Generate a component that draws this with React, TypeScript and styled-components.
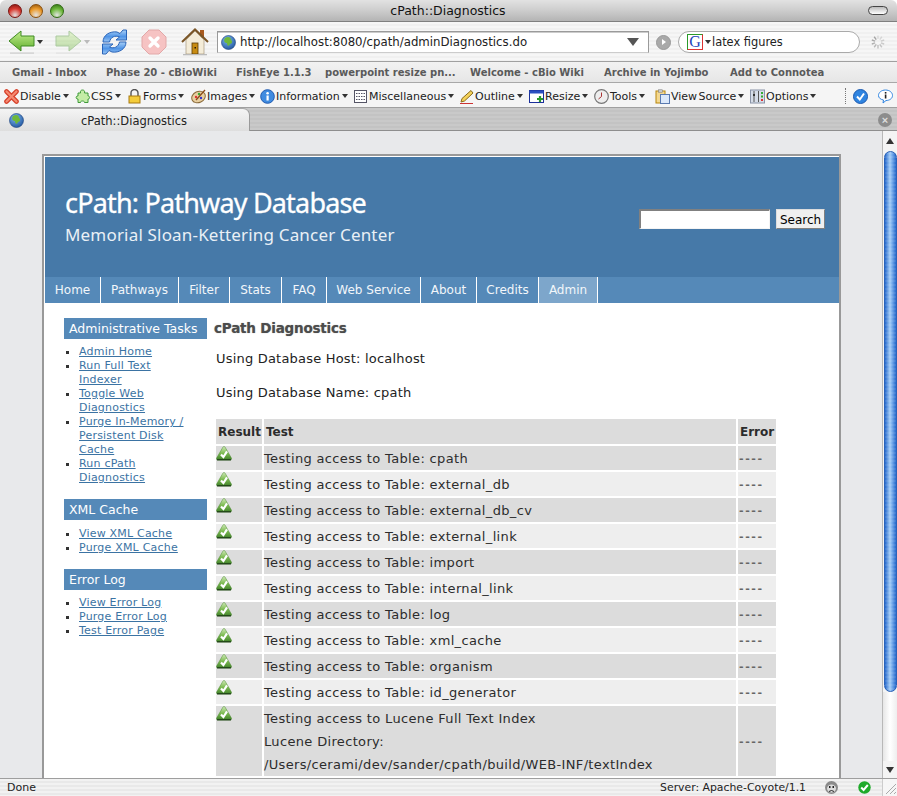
import React from 'react';
import styled, { createGlobalStyle } from 'styled-components';

const GlobalStyle = createGlobalStyle`
	html, body {
		margin: 0;
		padding: 0;
		background: #fff;
		overflow: hidden;
	}
	* {
		box-sizing: border-box;
	}
`;

const uiFont = `"DejaVu Sans", "Liberation Sans", sans-serif`;

const Window = styled.div`
	width: 897px;
	height: 796px;
	display: flex;
	flex-direction: column;
	overflow: hidden;
	font-family: ${uiFont};
	color: #222;
`;

const TitleBar = styled.div`
	height: 22px;
	flex: none;
	display: flex;
	align-items: center;
	justify-content: space-between;
	padding: 0 9px 0 8px;
	border-radius: 6px 6px 0 0;
	border-bottom: 1px solid #7f7f7f;
	background: linear-gradient(#e2e2e2, #cfcfcf 45%, #b4b4b4);
`;

const Lights = styled.div`
	display: flex;
	gap: 7px;
	width: 100px;
`;

const Light = styled.span<{ $color: string; $dark: string }>`
	width: 14px;
	height: 14px;
	border-radius: 50%;
	border: 1px solid ${(p) => p.$dark};
	background: radial-gradient(circle at 50% 85%, #fff8 0, ${(p) => p.$color} 55%, ${(p) => p.$dark} 100%);
`;

const WindowTitle = styled.div`
	font-size: 12.5px;
	color: #111;
`;

const TitlePill = styled.div`
	width: 100px;
	display: flex;
	justify-content: flex-end;
	& > span {
		width: 20px;
		height: 9px;
		border-radius: 5px;
		border: 1.5px solid #444;
		background: linear-gradient(#bbb, #fff);
	}
`;

const NavBar = styled.div`
	height: 40px;
	flex: none;
	display: flex;
	align-items: center;
	padding: 1px 0 0 8px;
	border-bottom: 1px solid #a0a0a0;
	background: repeating-linear-gradient(#f6f6f6 0 2px, #f0f0f0 2px 4px);
`;

const Caret = styled.span<{ $faded?: boolean }>`
	width: 0;
	height: 0;
	margin: 0 0 0 2px;
	border-left: 3px solid transparent;
	border-right: 3px solid transparent;
	border-top: 4px solid ${(p) => (p.$faded ? '#bbb' : '#333')};
`;

const NavButton = styled.span<{ $width: number }>`
	width: ${(p) => p.$width}px;
	display: flex;
	align-items: center;
	flex: none;
`;

const UrlField = styled.div`
	width: 432px;
	height: 22px;
	margin-left: 2px;
	display: flex;
	align-items: center;
	gap: 4px;
	padding: 0 9px 0 3px;
	background: #fff;
	border: 1px solid #9a9a9a;
	border-bottom-color: #ccc;
	box-shadow: inset 0 1px 0 #ccc;
	font-size: 11.75px;
	color: #222;
`;

const UrlText = styled.span`
	flex: 1;
`;

const UrlArrow = styled.span`
	border-left: 6px solid transparent;
	border-right: 6px solid transparent;
	border-top: 8px solid #555;
`;

const GoButton = styled.span`
	width: 15px;
	height: 15px;
	margin: 0 7px;
	flex: none;
	border-radius: 50%;
	background: #a9a9a9;
	border: 1px solid #999;
	display: flex;
	align-items: center;
	justify-content: center;
`;

const SearchField = styled.div`
	width: 182px;
	height: 22px;
	flex: none;
	display: flex;
	align-items: center;
	padding: 0 8px;
	background: #fff;
	border: 1px solid #aaa;
	border-radius: 11px;
	font-size: 11.4px;
`;

const GoogleBox = styled.span`
	width: 16px;
	height: 16px;
	flex: none;
	border: 1px solid #2a9a2a;
	border-right-color: #d33;
	border-bottom-color: #d33;
	color: #2244bb;
	font: 16px/14px "Liberation Serif", serif;
	text-align: center;
`;

const SearchText = styled.span`
	margin-left: 1px;
`;

const BookmarkBar = styled.div`
	height: 21px;
	flex: none;
	display: flex;
	align-items: center;
	gap: 15px;
	padding: 1px 0 0 12px;
	border-bottom: 1px solid #a8a8a8;
	background: linear-gradient(#f2f2f2, #e6e6e6);
`;

const Bookmark = styled.span<{ $width: number }>`
	width: ${(p) => p.$width}px;
	flex: none;
	font-size: 10px;
	font-weight: 700;
	color: #5a5a5a;
	white-space: nowrap;
`;

const DevBar = styled.div`
	height: 25px;
	flex: none;
	display: flex;
	align-items: center;
	padding: 2px 0 0 4px;
	border-bottom: 1px solid #a0a0a0;
	background: #f5f5f5;
`;

const DevItem = styled.span<{ $width: number }>`
	width: ${(p) => p.$width}px;
	flex: none;
	display: flex;
	align-items: center;
	gap: 1px;
	font-size: 11px;
	word-spacing: -2px;
	color: #222;
	white-space: nowrap;
`;

const DevCaret = styled(Caret)`
	margin-left: 1px;
`;

const DevSpacer = styled.span`
	width: 8px;
	height: 16px;
	flex: none;
	margin-left: 19px;
	border-left: 1px dotted #777;
`;

const DevExtra = styled.span`
	width: 25px;
	flex: none;
	display: flex;
`;

const TabStrip = styled.div`
	height: 23px;
	flex: none;
	display: flex;
	align-items: flex-end;
	justify-content: space-between;
	padding-right: 5px;
	border-bottom: 1px solid #8e8e8e;
	background: repeating-linear-gradient(#c9c9c9 0 2px, #c3c3c3 2px 4px);
`;

const Tab = styled.div`
	width: 250px;
	height: 23px;
	margin-bottom: -1px;
	position: relative;
	display: flex;
	align-items: center;
	padding: 1px 0 0 9px;
	border: 1px solid #9a9a9a;
	border-top-color: #aaa;
	border-left: none;
	border-bottom: none;
	border-radius: 0 7px 0 0;
	background: linear-gradient(#f4f4f4, #dedede);
`;

const TabLabel = styled.span`
	margin-left: 57px;
	font-size: 11.5px;
	color: #222;
`;

const TabClose = styled.span`
	width: 14px;
	height: 14px;
	margin-bottom: 3px;
	border-radius: 50%;
	background: #8c8c8c;
	color: #ddd;
	font: 700 11px/14px "Liberation Sans", sans-serif;
	text-align: center;
`;

const Viewport = styled.div`
	flex: 1;
	min-height: 0;
	display: flex;
	overflow: hidden;
`;

const Gutter = styled.div`
	flex: 1;
	min-width: 0;
	overflow: hidden;
	padding: 23px 41px 0 42px;
	background: #e8e9eb;
`;

const Sheet = styled.div`
	background: #fff;
	border: 2px solid #999;
	border-bottom: none;
	padding: 1px 0 0 1px;
	min-height: 700px;
`;

const Banner = styled.header`
	height: 120px;
	display: flex;
	justify-content: space-between;
	padding: 28px 14px 0 20px;
	background: #4679a8;
`;

const Brand = styled.div`
	color: #fff;
`;

const BrandTitle = styled.h1`
	margin: 0;
	font: 400 27px/36px "Noto Sans", sans-serif;
	letter-spacing: -0.82px;
	-webkit-text-stroke: 0.3px #fff;
`;

const BrandSub = styled.h2`
	margin: 2px 0 0;
	font: 400 17px/24px "Noto Sans", sans-serif;
	letter-spacing: 0.18px;
	color: #eaf0f6;
`;

const SearchForm = styled.form`
	margin-top: 24px;
	display: flex;
	gap: 6px;
	height: 20px;
`;

const SearchInput = styled.input`
	width: 131px;
	height: 20px;
	padding: 0;
	border: 1px solid #f4f4f4;
	border-top: 2px solid #808080;
	border-left: 2px solid #808080;
	background: #fff;
`;

const SearchButton = styled.button`
	width: 49px;
	height: 20px;
	padding: 1px 0 0;
	font: 12px/16px "DejaVu Sans", sans-serif;
	color: #000;
	background: #f0f0f0;
	border: 1px solid #808080;
	border-top-color: #ddd;
	border-left-color: #ddd;
`;

const Menu = styled.nav`
	height: 26px;
	display: flex;
	background: #5589b8;
`;

const MenuItem = styled.a<{ $width: number; $active?: boolean }>`
	width: ${(p) => p.$width}px;
	flex: none;
	text-align: center;
	font-size: 12px;
	line-height: 26px;
	color: #f2f6fa;
	border-right: 1px solid #fff;
	background: ${(p) => (p.$active ? '#7da6cb' : 'transparent')};
`;

const Body = styled.div`
	display: flex;
	padding: 15px 0 0 19px;
`;

const Sidebar = styled.aside`
	width: 143px;
	flex: none;
`;

const SideHeading = styled.h3`
	margin: 0;
	height: 21px;
	padding-left: 5px;
	font-size: 12.5px;
	font-weight: 400;
	line-height: 21px;
	color: #fff;
	background: #5589b8;
`;

const SideList = styled.ul<{ $top?: number }>`
	margin: ${(p) => p.$top ?? 6}px 0 14px;
	padding: 0 16px 0 15px;
	list-style: square;
	font-size: 11px;
	line-height: 14px;
	letter-spacing: 0.2px;
	color: #333;
`;

const SideLink = styled.a`
	color: #3b73a3;
	text-decoration: underline;
`;

const Main = styled.main`
	margin-left: 9px;
	width: 560px;
`;

const Heading = styled.h2`
	margin: 0 0 0 -2px;
	font: 700 13.5px/20px "DejaVu Sans", sans-serif;
	letter-spacing: -0.2px;
	color: #4c4c4c;
	text-shadow: 0 0 1px #999;
`;

const InfoLine = styled.p`
	margin: 11px 0 0;
	font-size: 13px;
	line-height: 20px;
	letter-spacing: 0.2px;
	color: #222;
	& + & {
		margin-top: 14px;
	}
`;

const Results = styled.table`
	margin: 14px 0 0 -2px;
	width: 564px;
	border-collapse: separate;
	border-spacing: 2px;
	table-layout: fixed;
	font-size: 13px;
	letter-spacing: 0.34px;
	color: #2c2c2c;
`;

const HeadCell = styled.th`
	height: 25px;
	padding: 0 2px;
	text-align: left;
	font-weight: 700;
	font-size: 12px;
	letter-spacing: 0;
	background: #dcdcdc;
`;

const Row = styled.tr<{ $odd: boolean }>`
	background: ${(p) => (p.$odd ? '#dcdcdc' : '#eeeeee')};
`;

const IconCell = styled.td`
	height: 24px;
	padding: 0;
	vertical-align: top;
`;

const TestCell = styled.td`
	padding: 1px 1px 0 0;
	line-height: 23px;
	white-space: nowrap;
`;

const ErrorCell = styled.td`
	padding: 0 1px;
	color: #666;
	font-weight: 700;
	font-size: 11px;
	letter-spacing: 1.6px;
`;

const Scrollbar = styled.div`
	width: 15px;
	flex: none;
	display: flex;
	flex-direction: column;
	align-items: center;
	background: #f4f4f4;
	border-left: 1px solid #b8b8b8;
`;

const ScrollCap = styled.div<{ $height: number }>`
	height: ${(p) => p.$height}px;
	flex: none;
	display: flex;
	align-items: center;
	justify-content: center;
`;

const ScrollThumb = styled.div`
	width: 13px;
	height: 541px;
	flex: none;
	border-radius: 7px;
	border: 1px solid #2a62b8;
	background:
		repeating-linear-gradient(#ffffff14 0 2px, transparent 2px 4px),
		linear-gradient(90deg, #2468cc, #a5cdf6 45%, #7fb3ef 60%, #2468cc);
`;

const ScrollTrack = styled.div`
	flex: 1;
	width: 100%;
	background: linear-gradient(90deg, #e6e6e6, #fff 50%, #eee);
`;

const ScrollUp = styled.span`
	border-left: 4px solid transparent;
	border-right: 4px solid transparent;
	border-bottom: 6px solid #333;
`;

const ScrollDown = styled.span`
	border-left: 4px solid transparent;
	border-right: 4px solid transparent;
	border-top: 6px solid #333;
`;

const StatusBar = styled.footer`
	height: 18px;
	flex: none;
	display: flex;
	align-items: center;
	padding-left: 7px;
	font-size: 11px;
	color: #222;
	border-top: 1px solid #9e9e9e;
	background: repeating-linear-gradient(#f2f2f2 0 2px, #e9e9e9 2px 4px);
`;

const StatusText = styled.span`
	flex: 1;
`;

const StatusServer = styled.span`
	margin-right: 18px;
	font-size: 10.85px;
`;

const StatusIcon = styled.span<{ $gap: number }>`
	display: flex;
	margin-right: ${(p) => p.$gap}px;
`;

const Resizer = styled.span`
	width: 15px;
	height: 17px;
	flex: none;
	background: #f6f6f6;
	border-left: 1px solid #ccc;
	display: flex;
`;

/* drawn toolbar icons */

const Arrow = ({ flip, faded }: { flip?: boolean; faded?: boolean }) => (
	<svg width="27" height="24" viewBox="0 0 27 24" style={{ opacity: faded ? 0.38 : 1, transform: flip ? 'scaleX(-1)' : undefined }}>
		<defs>
			<linearGradient id={flip ? 'arrF' : 'arrB'} x1="0" y1="0" x2="0" y2="1">
				<stop offset="0" stopColor="#c5ef8e" />
				<stop offset="1" stopColor="#5fae2e" />
			</linearGradient>
		</defs>
		<path d="M1 11 L13 1 V6 H26 V16 H13 V21 Z" fill={`url(#${flip ? 'arrF' : 'arrB'})`} stroke="#3f8a22" strokeWidth="1" />
		<rect x="2" y="22.5" width="24" height="1.2" fill="#ccc" />
	</svg>
);

const Reload = () => (
	<svg width="27" height="26" viewBox="0 0 27 26">
		<defs>
			<linearGradient id="reloadFill" x1="0" y1="0" x2="0" y2="1">
				<stop offset="0" stopColor="#a9d0f7" />
				<stop offset="0.55" stopColor="#4f94e6" />
				<stop offset="1" stopColor="#9cc7f5" />
			</linearGradient>
		</defs>
		<path d="M2 13 C2 6 9 2 16 3 L19 4.5 L22 1 L25.5 1 L25.5 11 L15 11 L18.5 8 C14 6 9.5 8 8.5 13 Z" fill="url(#reloadFill)" stroke="#2a64b8" />
		<path d="M25 13 C25 20 18 24 11 23 L8 21.5 L5 25 L1.5 25 L1.5 15 L12 15 L8.5 18 C13 20 17.5 18 18.5 13 Z" fill="url(#reloadFill)" stroke="#2a64b8" />
	</svg>
);

const Stop = () => (
	<svg width="26" height="26" viewBox="0 0 26 26">
		<path d="M8 1 H18 L25 8 V18 L18 25 H8 L1 18 V8 Z" fill="#f6c3c3" stroke="#e2a8a8" />
		<path d="M9 9 L17 17 M17 9 L9 17" stroke="#fff" strokeWidth="3.4" strokeLinecap="round" />
	</svg>
);

const Home = () => (
	<svg width="28" height="28" viewBox="0 0 28 28">
		<rect x="19" y="2" width="4" height="8" fill="#a85a1e" />
		<path d="M5 12 L14 3 L23 12 V26 H5 Z" fill="#f4ecd8" stroke="#a89a80" strokeWidth="0.7" />
		<path d="M1 14 L14 1.5 L27 14" fill="none" stroke="#7a5526" strokeWidth="2" />
		<rect x="11" y="15" width="6" height="11" fill="#c88c12" stroke="#5a3a08" strokeWidth="0.8" />
		<rect x="13.5" y="19" width="1.5" height="1.5" fill="#2a1a04" />
		<rect x="2" y="26" width="24" height="1.3" fill="#bbb" />
	</svg>
);

const Globe = ({ id }: { id: string }) => (
	<svg width="15" height="15" viewBox="0 0 15 15">
		<defs>
			<radialGradient id={id} cx="0.4" cy="0.3" r="0.8">
				<stop offset="0" stopColor="#7fb8ee" />
				<stop offset="1" stopColor="#1a4f9a" />
			</radialGradient>
		</defs>
		<circle cx="7.5" cy="7.5" r="7" fill={`url(#${id})`} stroke="#1c3f78" strokeWidth="0.6" />
		<path d="M4 3 C7 1 10 2 10 5 C12 6 11 9 9 9 C8 12 6 11 6 8 C4 8 2 6 4 3 Z" fill="#6fb83a" />
	</svg>
);

const Spinner = () => (
	<svg width="16" height="16" viewBox="0 0 16 16" style={{ marginLeft: 10 }}>
		{Array.from({ length: 10 }, (_, i) => (
			<line key={i} x1="8" y1="1.5" x2="8" y2="5" stroke="#999" strokeOpacity={0.25 + i * 0.07} strokeWidth="1.4" transform={`rotate(${i * 36} 8 8)`} />
		))}
	</svg>
);

const Small = ({ children }: { children: React.ReactNode }) => (
	<svg width="15" height="15" viewBox="0 0 15 15" style={{ flex: 'none' }}>
		{children}
	</svg>
);

const devIcons: Record<string, React.ReactNode> = {
	Disable: (
		<>
			<path d="M2.5 2.5 L12.5 12.5 M12.5 2.5 L2.5 12.5" stroke="#d6402a" strokeWidth="4.6" strokeLinecap="round" />
			<path d="M2.5 2.5 L12.5 12.5 M12.5 2.5 L2.5 12.5" stroke="#f58a72" strokeWidth="2.2" strokeLinecap="round" />
		</>
	),
	CSS: <path d="M3 4 H5.5 C5 2 6 1 7.5 1 C9 1 10 2 9.5 4 H13 V7 C15 6.5 15 10.5 13 10 V13.5 H9.5 C10 11.5 5 11.5 5.5 13.5 H3 V10 C0.5 10.5 0.5 6.5 3 7 Z" fill="#c4eca6" stroke="#3f9a3a" />,
	Forms: (
		<>
			<path d="M4 7 V4 A3.5 3.5 0 0 1 11 4 V7" fill="none" stroke="#555" strokeWidth="1.4" />
			<rect x="2" y="7" width="11" height="7" fill="#f4cc3a" stroke="#a87a10" />
		</>
	),
	Images: (
		<>
			<ellipse cx="7.5" cy="8" rx="7" ry="5.5" fill="#e8cfa0" stroke="#8a6a3a" transform="rotate(-25 7.5 8)" />
			<circle cx="5" cy="8" r="1.2" fill="#d33" />
			<circle cx="8" cy="5" r="1.2" fill="#3a3" />
			<circle cx="10" cy="9" r="1.2" fill="#33c" />
			<path d="M14 1 L5 11" stroke="#8a4a1a" strokeWidth="1.3" />
		</>
	),
	Information: (
		<>
			<circle cx="7.5" cy="7.5" r="6.8" fill="#3f8be0" stroke="#1f5ab0" />
			<rect x="6.5" y="6.5" width="2.2" height="5" fill="#fff" />
			<circle cx="7.6" cy="4.3" r="1.3" fill="#fff" />
		</>
	),
	Miscellaneous: (
		<>
			<rect x="1.5" y="1.5" width="12" height="12" fill="#fff" stroke="#556" />
			<path d="M3 4.5 H12 M3 7.5 H12 M3 10.5 H12" stroke="#556" strokeDasharray="1.5 1" />
		</>
	),
	Outline: (
		<>
			<path d="M2 13 L3 9.5 L12 1.5 L14 4 L5.5 12 Z" fill="#f4d25a" stroke="#8a6a1a" />
			<path d="M1 14.5 H14" stroke="#c33" />
		</>
	),
	Resize: (
		<>
			<rect x="0.5" y="1.5" width="14" height="12" fill="#fff" stroke="#1a2f9a" />
			<rect x="0.5" y="1.5" width="14" height="3" fill="#2a4fc0" />
			<path d="M11 7 V13 M8 10 H14" stroke="#2a9a2a" strokeWidth="2.2" />
		</>
	),
	Tools: (
		<>
			<circle cx="7.5" cy="7.5" r="6.8" fill="#eee" stroke="#777" strokeWidth="1.2" />
			<path d="M7.5 3.5 V7.5 L4.5 10" fill="none" stroke="#a33" strokeWidth="1" />
		</>
	),
	'View Source': (
		<>
			<rect x="1" y="2" width="9" height="12" fill="#f4d890" stroke="#b8860b" />
			<rect x="3.5" y="0.8" width="4" height="2.4" fill="#ccc" stroke="#777" strokeWidth="0.5" />
			<rect x="5.5" y="5.5" width="9" height="9" fill="#dbe8fa" stroke="#5a7ab0" />
		</>
	),
	Options: (
		<>
			<rect x="0.5" y="1" width="14" height="13" fill="#d6dde8" stroke="#8a94a8" />
			<path d="M4 2 V13 M8.5 2 V13" stroke="#555" />
			<rect x="3" y="5" width="2" height="2" fill="#333" />
			<rect x="11" y="3" width="2" height="2" fill="#3a3" />
			<rect x="11" y="6.5" width="2" height="2" fill="#3a3" />
			<rect x="11" y="10" width="2" height="2" fill="#d33" />
		</>
	),
};

const devItems: [string, number][] = [
	['Disable', 71],
	['CSS', 52],
	['Forms', 64],
	['Images', 69],
	['Information', 93],
	['Miscellaneous', 106],
	['Outline', 70],
	['Resize', 65],
	['Tools', 61],
	['View Source', 95],
	['Options', 76],
];

const PassIcon = () => (
	<svg width="16" height="16" viewBox="0 0 16 16" style={{ display: 'block' }}>
		<defs>
			<linearGradient id="passFill" x1="0" y1="0" x2="0" y2="1">
				<stop offset="0" stopColor="#cfe9b6" />
				<stop offset="0.5" stopColor="#7dbb52" />
				<stop offset="1" stopColor="#3f8028" />
			</linearGradient>
		</defs>
		<path d="M7 1 C7.6 0.3 8.4 0.3 9 1 L15.4 12 C15.8 13 15.4 14 14 14 H2 C0.7 14 0.2 13 0.6 12 Z" fill="url(#passFill)" stroke="#4a8a30" strokeWidth="0.5" />
		<path d="M1 13.2 H15 V14.4 H1 Z" fill="#1c3a16" />
		<path d="M5 8.4 L7.4 11 L11 5.4" fill="none" stroke="#fff" strokeWidth="2.2" />
	</svg>
);

const tables = ['cpath', 'external_db', 'external_db_cv', 'external_link', 'import', 'internal_link', 'log', 'xml_cache', 'organism', 'id_generator'];

const menu: [string, number][] = [
	['Home', 56],
	['Pathways', 78],
	['Filter', 51],
	['Stats', 52],
	['FAQ', 45],
	['Web Service', 94],
	['About', 56],
	['Credits', 62],
];

const App = () => (
	<Window>
		<GlobalStyle />
		<TitleBar>
			<Lights>
				<Light $color="#d83a30" $dark="#7a1410" />
				<Light $color="#eb9a2a" $dark="#8a4f0c" />
				<Light $color="#6cb83a" $dark="#2f6a12" />
			</Lights>
			<WindowTitle>cPath::Diagnostics</WindowTitle>
			<TitlePill>
				<span />
			</TitlePill>
		</TitleBar>
		<NavBar>
			<NavButton $width={47}>
				<Arrow />
				<Caret />
			</NavButton>
			<NavButton $width={46}>
				<Arrow flip faded />
				<Caret $faded />
			</NavButton>
			<NavButton $width={40}>
				<Reload />
			</NavButton>
			<NavButton $width={40}>
				<Stop />
			</NavButton>
			<NavButton $width={34}>
				<Home />
			</NavButton>
			<UrlField>
				<Globe id="globeUrl" />
				<UrlText>http://localhost:8080/cpath/adminDiagnostics.do</UrlText>
				<UrlArrow />
			</UrlField>
			<GoButton>
				<Caret style={{ transform: 'rotate(-90deg)', margin: 0, borderTopColor: '#fff' }} />
			</GoButton>
			<SearchField>
				<GoogleBox>G</GoogleBox>
				<Caret />
				<SearchText>latex figures</SearchText>
			</SearchField>
			<Spinner />
		</NavBar>
		<BookmarkBar>
			<Bookmark $width={79}>Gmail - Inbox</Bookmark>
			<Bookmark $width={115}>Phase 20 - cBioWiki</Bookmark>
			<Bookmark $width={74}>FishEye 1.1.3</Bookmark>
			<Bookmark $width={130}>powerpoint resize pn...</Bookmark>
			<Bookmark $width={119}>Welcome - cBio Wiki</Bookmark>
			<Bookmark $width={111}>Archive in Yojimbo</Bookmark>
			<Bookmark $width={94}>Add to Connotea</Bookmark>
		</BookmarkBar>
		<DevBar>
			{devItems.map(([label, width]) => (
				<DevItem key={label} $width={width}>
					<Small>{devIcons[label]}</Small>
					{label}
					<DevCaret />
				</DevItem>
			))}
			<DevSpacer />
			<DevExtra>
				<Small>
					<circle cx="7.5" cy="7.5" r="7" fill="#2f84e0" stroke="#1c5ab0" />
					<path d="M4 7.5 L6.8 10.5 L11 4.5" fill="none" stroke="#fff" strokeWidth="2" />
				</Small>
			</DevExtra>
			<Small>
				<path d="M7.5 1 C11.5 1 14.5 3.5 14.5 6.5 C14.5 9.5 11.5 11.5 8 11.5 L5 14 L5.5 11 C2.5 10.5 0.5 8.8 0.5 6.5 C0.5 3.5 3.5 1 7.5 1 Z" fill="#fff" stroke="#2f84e0" />
				<rect x="6.8" y="5.5" width="1.6" height="4" fill="#222" />
				<rect x="6.8" y="3" width="1.6" height="1.6" fill="#222" />
			</Small>
		</DevBar>
		<TabStrip>
			<Tab>
				<Globe id="globeTab" />
				<TabLabel>cPath::Diagnostics</TabLabel>
			</Tab>
			<TabClose>×</TabClose>
		</TabStrip>
		<Viewport>
			<Gutter>
				<Sheet>
					<Banner>
						<Brand>
							<BrandTitle>cPath: Pathway Database</BrandTitle>
							<BrandSub>Memorial Sloan-Kettering Cancer Center</BrandSub>
						</Brand>
						<SearchForm>
							<SearchInput />
							<SearchButton type="button">Search</SearchButton>
						</SearchForm>
					</Banner>
					<Menu>
						{menu.map(([label, width]) => (
							<MenuItem key={label} $width={width}>
								{label}
							</MenuItem>
						))}
						<MenuItem $width={59} $active>
							Admin
						</MenuItem>
					</Menu>
					<Body>
						<Sidebar>
							<SideHeading>Administrative Tasks</SideHeading>
							<SideList>
								<li><SideLink>Admin Home</SideLink></li>
								<li><SideLink>Run Full Text Indexer</SideLink></li>
								<li><SideLink>Toggle Web Diagnostics</SideLink></li>
								<li><SideLink>Purge In-Memory / Persistent Disk Cache</SideLink></li>
								<li><SideLink>Run cPath Diagnostics</SideLink></li>
							</SideList>
							<SideHeading>XML Cache</SideHeading>
							<SideList $top={7}>
								<li><SideLink>View XML Cache</SideLink></li>
								<li><SideLink>Purge XML Cache</SideLink></li>
							</SideList>
							<SideHeading>Error Log</SideHeading>
							<SideList>
								<li><SideLink>View Error Log</SideLink></li>
								<li><SideLink>Purge Error Log</SideLink></li>
								<li><SideLink>Test Error Page</SideLink></li>
							</SideList>
						</Sidebar>
						<Main>
							<Heading>cPath Diagnostics</Heading>
							<InfoLine>Using Database Host: localhost</InfoLine>
							<InfoLine>Using Database Name: cpath</InfoLine>
							<Results>
								<colgroup>
									<col width="46" />
									<col width="472" />
									<col width="38" />
								</colgroup>
								<thead>
									<tr>
										<HeadCell>Result</HeadCell>
										<HeadCell>Test</HeadCell>
										<HeadCell>Error</HeadCell>
									</tr>
								</thead>
								<tbody>
									{tables.map((name, i) => (
										<Row key={name} $odd={i % 2 === 0}>
											<IconCell><PassIcon /></IconCell>
											<TestCell>Testing access to Table: {name}</TestCell>
											<ErrorCell>----</ErrorCell>
										</Row>
									))}
									<Row $odd>
										<IconCell><PassIcon /></IconCell>
										<TestCell>
											Testing access to Lucene Full Text Index
											<br />
											Lucene Directory:
											<br />
											/Users/cerami/dev/sander/cpath/build/WEB-INF/textIndex
										</TestCell>
										<ErrorCell>----</ErrorCell>
									</Row>
								</tbody>
							</Results>
						</Main>
					</Body>
				</Sheet>
			</Gutter>
			<Scrollbar>
				<ScrollCap $height={20}>
					<ScrollUp />
				</ScrollCap>
				<ScrollThumb />
				<ScrollTrack />
				<ScrollCap $height={17}>
					<ScrollDown />
				</ScrollCap>
			</Scrollbar>
		</Viewport>
		<StatusBar>
			<StatusText>Done</StatusText>
			<StatusServer>Server: Apache-Coyote/1.1</StatusServer>
			<StatusIcon $gap={19}>
				<svg width="15" height="15" viewBox="0 0 15 15">
					<circle cx="7.5" cy="7.5" r="6.5" fill="#8a8a8a" />
					<ellipse cx="7.5" cy="8.5" rx="4.5" ry="4" fill="#ddd" />
					<rect x="5" y="6" width="1.5" height="2" fill="#222" />
					<rect x="8.5" y="6" width="1.5" height="2" fill="#222" />
					<path d="M5 11.5 Q7.5 9.5 10 11.5" fill="none" stroke="#222" />
				</svg>
			</StatusIcon>
			<StatusIcon $gap={11}>
				<svg width="13" height="13" viewBox="0 0 13 13">
					<circle cx="6.5" cy="6.5" r="6.2" fill="#1faa2a" />
					<path d="M3.2 6.5 L5.6 9 L9.8 4" fill="none" stroke="#fff" strokeWidth="2" />
				</svg>
			</StatusIcon>
			<Resizer>
				<svg width="14" height="16" viewBox="0 0 14 16">
					<path d="M3 15 L13 5 M7 15 L13 9 M11 15 L13 13" stroke="#aaa" />
				</svg>
			</Resizer>
		</StatusBar>
	</Window>
);

export default App;
